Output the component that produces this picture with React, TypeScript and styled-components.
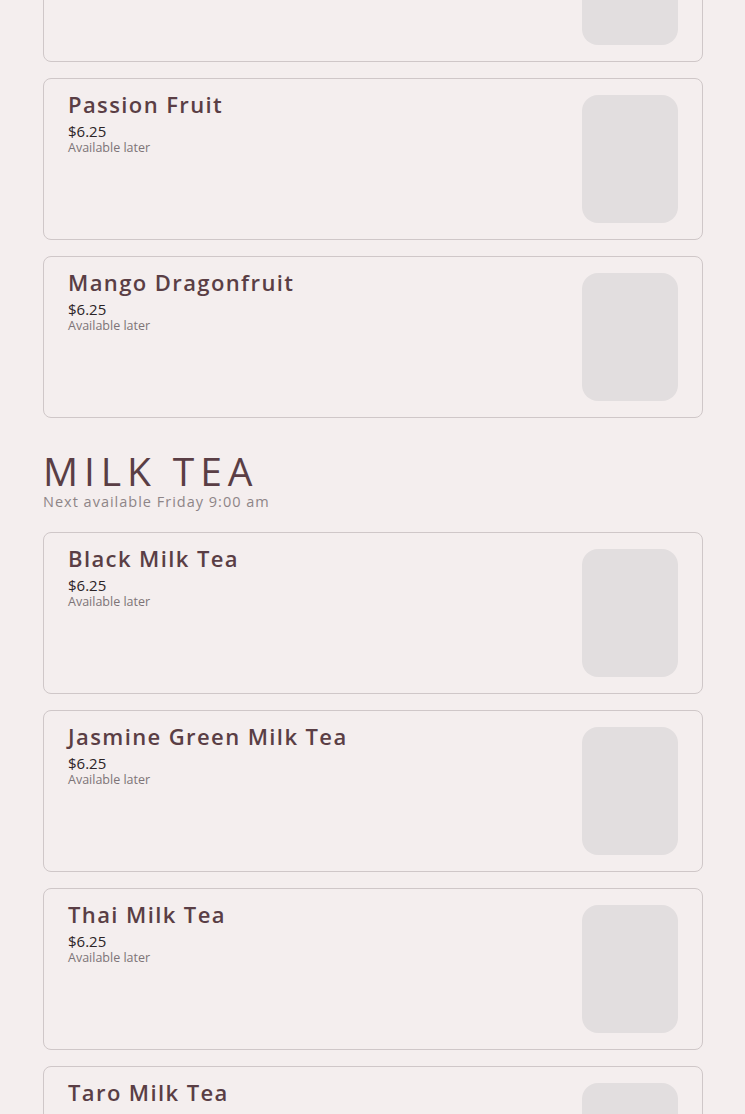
import React from "react";
import styled, { createGlobalStyle } from "styled-components";

const Global = createGlobalStyle`
  html, body { margin: 0; padding: 0; background: #f4eeee; }
  body { font-family: "Open Sans", "Liberation Sans", sans-serif; overflow: hidden; }
`;

const Page = styled.main`
  padding: 0 42px 0 43px;
  margin-top: -100px;
  display: flex;
  flex-direction: column;
`;

const Section = styled.section`
  display: flex;
  flex-direction: column;
`;

const SectionHeader = styled.header`
  margin: 31px 0 21px;
  display: flex;
  flex-direction: column;
`;

const SectionTitle = styled.h2`
  margin: 0;
  font-family: "Open Sans", sans-serif;
  font-weight: 400;
  font-size: 39px;
  line-height: 44px;
  letter-spacing: 5.9px;
  color: #5a3e45;
`;

const SectionNote = styled.div`
  margin-top: 0;
  font-size: 14.5px;
  line-height: 18px;
  letter-spacing: 1px;
  color: #8e8587;
`;

const List = styled.div`
  display: flex;
  flex-direction: column;
  gap: 16px;
`;

const Card = styled.article`
  box-sizing: border-box;
  height: 162px;
  border: 1px solid #cfc7c8;
  border-radius: 8px;
  padding: 16px 24px 16px 24px;
  display: flex;
  justify-content: space-between;
  align-items: flex-start;
`;

const Info = styled.div`
  display: flex;
  flex-direction: column;
`;

const Name = styled.h3`
  margin: 0;
  font-weight: 600;
  font-size: 22px;
  line-height: 18px;
  letter-spacing: 1.4px;
  color: #5a3e45;
`;

const Price = styled.div`
  margin-top: 9px;
  font-size: 15px;
  line-height: 18px;
  color: #2c2426;
`;

const Status = styled.div`
  font-size: 12.5px;
  line-height: 16px;
  color: #7d7477;
`;

const Thumb = styled.div`
  width: 96px;
  height: 128px;
  border-radius: 16px;
  background: #e2dedf;
  flex-shrink: 0;
`;

type Item = { name: string; price: string };

const ItemCard = ({ item }: { item: Item }) => (
  <Card>
    <Info>
      <Name>{item.name}</Name>
      <Price>{item.price}</Price>
      <Status>Available later</Status>
    </Info>
    <Thumb />
  </Card>
);

const fruit: Item[] = [
  { name: "Lychee", price: "$6.25" },
  { name: "Passion Fruit", price: "$6.25" },
  { name: "Mango Dragonfruit", price: "$6.25" },
];

const milk: Item[] = [
  { name: "Black Milk Tea", price: "$6.25" },
  { name: "Jasmine Green Milk Tea", price: "$6.25" },
  { name: "Thai Milk Tea", price: "$6.25" },
  { name: "Taro Milk Tea", price: "$6.25" },
];

export default function App() {
  return (
    <>
      <Global />
      <Page>
        <Section>
          <List>
            {fruit.map((i) => (
              <ItemCard key={i.name} item={i} />
            ))}
          </List>
        </Section>
        <Section>
          <SectionHeader>
            <SectionTitle>MILK TEA</SectionTitle>
            <SectionNote>Next available Friday 9:00 am</SectionNote>
          </SectionHeader>
          <List>
            {milk.map((i) => (
              <ItemCard key={i.name} item={i} />
            ))}
          </List>
        </Section>
      </Page>
    </>
  );
}
